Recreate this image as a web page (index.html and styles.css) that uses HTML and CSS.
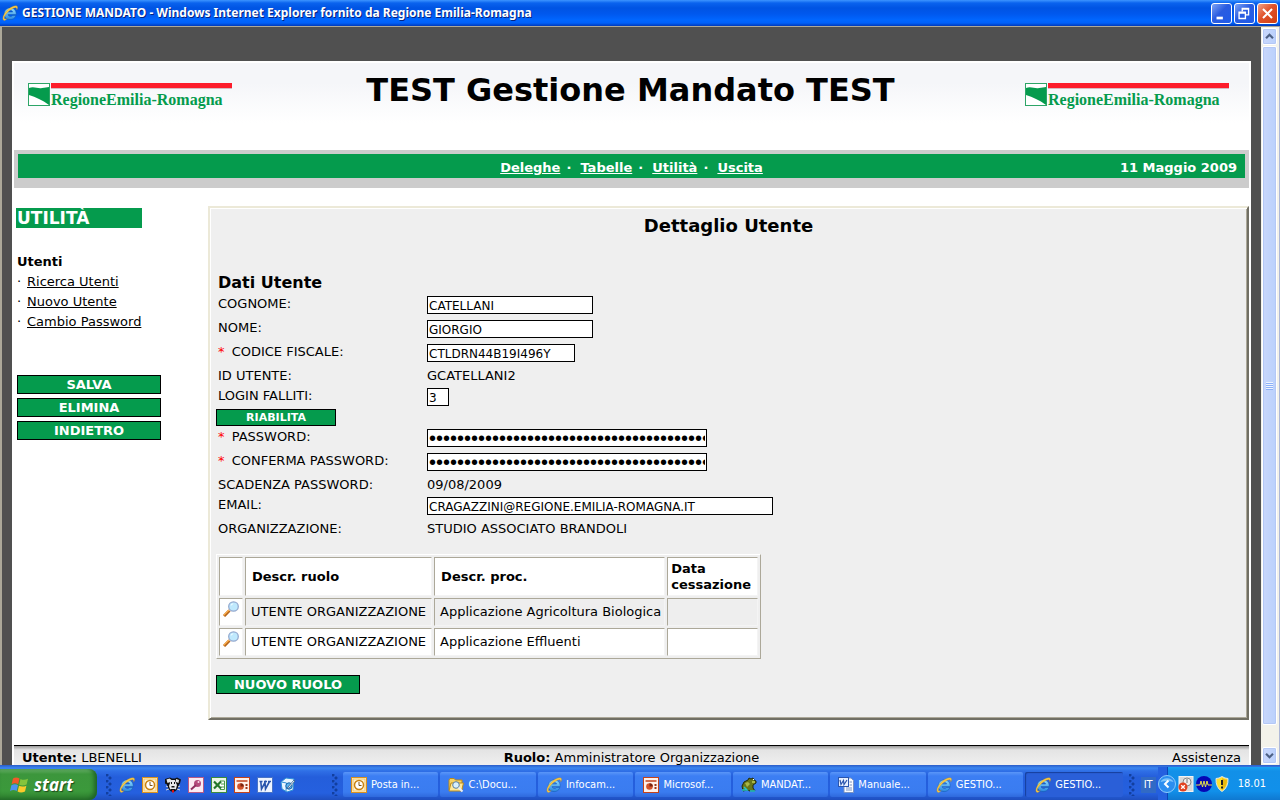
FILE: index.html
```html
<!DOCTYPE html>
<html lang="it">
<head>
<meta charset="utf-8">
<title>GESTIONE MANDATO</title>
<link rel="stylesheet" href="styles.css">
</head>
<body>
<svg class="defs" aria-hidden="true">
  <defs>
    <linearGradient id="sky" x1="0" y1="0" x2="0" y2="1"><stop offset="0" stop-color="#8fdcff"/><stop offset="1" stop-color="#2a86e0"/></linearGradient>
    <symbol id="ie" viewBox="0 0 16 16">
      <path d="M14.200 9.600H6c.2 2 3.400 2.500 4.700.9h3.200c-1 2.900-3.300 4.100-5.800 4.100C4.500 14.600 2.200 12.300 2.200 8.900c0-3.400 2.500-5.900 6-5.900 3.800 0 6.200 2.500 6 6.600zM10.600 7c-.3-1.900-4.200-2-4.700 0z" fill="url(#sky)" stroke="#1159ad" stroke-width=".5"/>
      <path d="M2.300 15.500C-.8 14.800 1.200 8.600 6.300 4.200 9.900 1.100 15.200-.8 15.600 2.200c.1.900-.3 1.900-.9 2.900.4-2.400-.8-3.100-3.300-1.900C6.900 5.200 2.500 10.300 2.300 12.800c-.1 1.300 1 1.500 3 .6-1.200 1.200-2.200 2.100-3 2.100z" fill="#f8c946" stroke="#b78921" stroke-width=".3"/>
    </symbol>
    <symbol id="outlook" viewBox="0 0 16 16">
      <rect x=".5" y=".5" width="15" height="15" fill="#fff2cf" stroke="#d9911f"/><rect x="2" y="2" width="12" height="12" fill="none" stroke="#f3c468"/>
      <circle cx="8" cy="8" r="4.500" fill="#fff" stroke="#c98212" stroke-width="1.500"/><path d="M8 5v3.500h2.500" fill="none" stroke="#80561b"/>
    </symbol>
    <symbol id="dog" viewBox="0 0 16 16">
      <path d="M0 2l5-1.500 2 1h3l2-1 4 2-1 4-1 1-1 4-3 3H6l-3-3-1-4-2-1z" fill="#111"/><path d="M1.500 2.500l3-1 2 1.500-1 2-3 1zM11 2l3 1-.5 3-2.500-1zM6 3h4l1 3 1 2-1 4-2 1H7l-2-1-1-3 1-3z" fill="#e8e8e8"/><path d="M6 5h1v2H6zM9 5h1v2H9zM6.500 9h3v1.500h-3zM6 12h4v1H6z" fill="#111"/><path d="M7 13h2v2.500H7z" fill="#d11"/><path d="M1 9l2 1M1 13l3-1M15 9l-2 1M15 13l-3-1" stroke="#ddd"/>
    </symbol>
    <symbol id="access" viewBox="0 0 16 16">
      <rect x=".5" y=".5" width="15" height="15" fill="#fbeaf2" stroke="#b65a86"/><circle cx="9.500" cy="6.500" r="3.500" fill="#b34a7b"/><path d="M8 8l-5 4.500" stroke="#8f2d5e" stroke-width="2"/><circle cx="10.500" cy="5" r="1" fill="#f8dce9"/>
    </symbol>
    <symbol id="excel" viewBox="0 0 16 16">
      <rect x=".5" y=".5" width="15" height="15" fill="#eaf6e6" stroke="#3c8b3d"/><path d="M9 4h4.500v8.500H9M10 7h3M10 10h3" fill="#fff" stroke="#4a9a4b"/><path d="M3 4.500l7 7M10 4.500l-7 7" stroke="#23772a" stroke-width="2.200"/>
    </symbol>
    <symbol id="ppt" viewBox="0 0 16 16">
      <rect x=".5" y=".5" width="15" height="15" fill="#fff0e9" stroke="#c4431b"/><path d="M2.500 4h11" stroke="#c4431b" stroke-width="1.500"/><circle cx="6.500" cy="9.500" r="3.300" fill="#d4532a"/><path d="M6.500 9.500V6.200A3.300 3.300 0 0 1 9.800 9.500z" fill="#7a2410"/><path d="M11.500 7h2v2h-2zM11.500 10h2v2h-2z" fill="#9b371b"/>
    </symbol>
    <symbol id="word" viewBox="0 0 16 16">
      <rect x=".5" y=".5" width="15" height="15" fill="#eef4ff" stroke="#4a74c5"/><path d="M2.500 4.500h3M3.800 4.500l.7 7.500L8 5.500l.5 6.500 4-7.500M7 4.500h3M11 4.500h3" fill="none" stroke="#2a55ad" stroke-width="1.600"/>
    </symbol>
    <symbol id="worddoc" viewBox="0 0 16 16">
      <path d="M6 1h7l2.500 2.500V15.500H6z" fill="#f8fbff" stroke="#7a93c2"/><path d="M8 11h6M8 13h6M11.500 5H14M11.500 8H14" stroke="#7a93c2"/><rect x=".5" y=".5" width="10" height="9" fill="#e6efff" stroke="#2a55ad"/><path d="M2 3l1 4.500L5.500 3.500l.5 4L9 3" fill="none" stroke="#2a55ad" stroke-width="1.200"/>
    </symbol>
    <symbol id="desk" viewBox="0 0 16 16">
      <path d="M1 5l5-4 8 1-1 11-6 2-5-3z" fill="#e9f6ff" stroke="#2e8fd6"/><path d="M1.500 5l5 1-.5 8" fill="none" stroke="#2e8fd6"/><circle cx="9" cy="9" r="3.200" fill="#5fb7ee" stroke="#1365ad"/><path d="M8 10l6-7 1 1-6 7-2 .5z" fill="#fff" stroke="#27578b" stroke-width=".8"/>
    </symbol>
    <symbol id="folder" viewBox="0 0 16 16">
      <path d="M1 3l1-1.500h4L7.500 3H14v10H1z" fill="#f6d265" stroke="#b98a1c"/><path d="M3 6h12.500l-2 8H1z" fill="#ffe99a" stroke="#b98a1c"/><circle cx="8" cy="8" r="3.300" fill="#d8f1ff" stroke="#5a7da0"/><path d="M10.500 10.500l4 4" stroke="#e8eef5" stroke-width="2"/>
    </symbol>
    <symbol id="frog" viewBox="0 0 16 16">
      <path d="M1 9l2-4 4-2 1-2 2 1 2-1 1 2 2 1v2l-3 2v3l2 3h-5l-3-1-4 1z" fill="#68761a" stroke="#232b08"/><path d="M4 6l3-1 2 2-3 3zM11 4h3v2h-3z" fill="#aab748"/><path d="M12 2h1v1h-1z" fill="#fff"/><path d="M1 13h5l-3-3M9 14h5" stroke="#25c4c9" stroke-width="1.500" fill="none"/>
    </symbol>
    <symbol id="winflag" viewBox="0 0 20 18">
      <path d="M3 2.500Q6 .5 9.500 2.500L8.200 8.200Q5 6.300 1.600 8.200z" fill="#f1592a"/><path d="M10.500 3Q14 4.800 18 2.800L16.600 8.600Q12.500 10.400 9.200 8.700z" fill="#85c43c"/><path d="M1.400 9.300Q5 7.300 8 9.200L6.700 15Q3.500 13.200 0 15.100z" fill="#4d93f0"/><path d="M9 9.800Q12.500 11.400 16.400 9.700L15 15.400Q11 17.300 7.600 15.500z" fill="#fbca2b"/>
    </symbol>
    <symbol id="lens" viewBox="0 0 16 16">
      <path d="M1 15l5.500-5.500" stroke="#b4641c" stroke-width="3"/><path d="M.7 14.300L6 9" stroke="#ffb04a" stroke-width="1.200"/><ellipse cx="10.500" cy="5.500" rx="4.800" ry="4.600" fill="#bfe9fd" stroke="#93a9cf" stroke-width="1.300"/><path d="M7.500 5q.6-2.500 3-2.700-1 1.500-3 2.700z" fill="#fff"/>
    </symbol>
    <symbol id="logo" viewBox="0 0 204 28">
      <rect x=".5" y=".5" width="21" height="22" fill="#fff" stroke="#2da567"/>
      <path d="M1 5c5-2 9 1 13 0 3 0 5-1 7-1v18C14 17 8 14 1 12z" fill="#059b4d"/>
      <rect x="23" y="0" width="181" height="5" fill="#fd1c2b"/><path d="M23 5.500h181" stroke="#d8b9c0"/>
      <text x="23" y="22" class="logo-text">RegioneEmilia-Romagna</text>
    </symbol>
  </defs>
</svg>

<header class="titlebar">
  <svg class="icon"><use href="#ie"/></svg>
  <span class="caption">GESTIONE MANDATO - Windows Internet Explorer fornito da Regione Emilia-Romagna</span>
  <button class="winbtn" aria-label="Riduci a icona"><svg viewBox="0 0 21 21"><path d="M5 15.500h7" stroke="#fff" stroke-width="3"/></svg></button>
  <button class="winbtn" aria-label="Ripristina"><svg viewBox="0 0 21 21"><path d="M8 8V5h7v7h-3M8 5.500h7M4.500 9v7h7V9zM4.500 10h7" fill="none" stroke="#fff" stroke-width="1.500"/></svg></button>
  <button class="winbtn close" aria-label="Chiudi"><svg viewBox="0 0 21 21"><path d="M5.500 5.500l10 10M15.500 5.500l-10 10" stroke="#fff" stroke-width="2.200"/></svg></button>
</header>

<div class="viewport">
  <div class="backdrop">
    <div class="sheet">
      <div class="banner">
        <svg class="logo" role="img" aria-label="Regione Emilia-Romagna"><use href="#logo"/></svg>
        <h1>TEST Gestione Mandato TEST</h1>
        <svg class="logo" role="img" aria-label="Regione Emilia-Romagna"><use href="#logo"/></svg>
      </div>
      <nav class="menu">
        <div class="menu-links"><a href="#">Deleghe</a><span>·</span><a href="#">Tabelle</a><span>·</span><a href="#">Utilità</a><span>·</span><a href="#">Uscita</a></div>
        <div class="date">11 Maggio 2009</div>
      </nav>
      <div class="columns">
        <aside class="side">
          <h2>UTILITÀ</h2>
          <h3>Utenti</h3>
          <ul>
            <li><a href="#">Ricerca Utenti</a></li>
            <li><a href="#">Nuovo Utente</a></li>
            <li><a href="#">Cambio Password</a></li>
          </ul>
          <div class="actions">
            <button class="btn">SALVA</button>
            <button class="btn">ELIMINA</button>
            <button class="btn">INDIETRO</button>
          </div>
        </aside>
        <main class="panel">
          <h2>Dettaglio Utente</h2>
          <form class="details">
            <h3>Dati Utente</h3>
            <div class="row field"><label for="cognome">COGNOME:</label><input id="cognome" class="medium" value="CATELLANI"></div>
            <div class="row field"><label for="nome">NOME:</label><input id="nome" class="medium" value="GIORGIO"></div>
            <div class="row field"><label for="cf"><i>*</i> CODICE FISCALE:</label><input id="cf" class="small" value="CTLDRN44B19I496Y"></div>
            <div class="row"><span class="name">ID UTENTE:</span><span>GCATELLANI2</span></div>
            <div class="row field"><label for="login">LOGIN FALLITI:</label><input id="login" class="tiny" value="3"></div>
            <button type="button" class="btn btn-small">RIABILITA</button>
            <div class="row field"><label for="pw"><i>*</i> PASSWORD:</label><input id="pw" type="password" class="large" value="0123456789012345678901234567890123456789"></div>
            <div class="row field"><label for="pw2"><i>*</i> CONFERMA PASSWORD:</label><input id="pw2" type="password" class="large" value="0123456789012345678901234567890123456789"></div>
            <div class="row"><span class="name">SCADENZA PASSWORD:</span><span>09/08/2009</span></div>
            <div class="row field"><label for="email">EMAIL:</label><input id="email" class="wide" value="CRAGAZZINI@REGIONE.EMILIA-ROMAGNA.IT"></div>
            <div class="row"><span class="name">ORGANIZZAZIONE:</span><span>STUDIO ASSOCIATO BRANDOLI</span></div>
          </form>
          <table class="roles">
            <thead><tr><th></th><th>Descr. ruolo</th><th>Descr. proc.</th><th class="end">Data<br>cessazione</th></tr></thead>
            <tbody>
              <tr class="alt"><td><a href="#" aria-label="Dettaglio"><svg class="icon"><use href="#lens"/></svg></a></td><td>UTENTE ORGANIZZAZIONE</td><td class="proc">Applicazione Agricoltura Biologica</td><td></td></tr>
              <tr><td><a href="#" aria-label="Dettaglio"><svg class="icon"><use href="#lens"/></svg></a></td><td>UTENTE ORGANIZZAZIONE</td><td class="proc">Applicazione Effluenti</td><td></td></tr>
            </tbody>
          </table>
          <button class="btn">NUOVO RUOLO</button>
        </main>
      </div>
      <footer class="status">
        <div><b>Utente:</b> LBENELLI</div>
        <div><b>Ruolo:</b> Amministratore Organizzazione</div>
        <div>Assistenza</div>
      </footer>
    </div>
  </div>
  <div class="scroll">
    <button aria-label="Su"><svg viewBox="0 0 15 15"><path d="M3.500 9.500l4-4 4 4" fill="none" stroke="#4d6185" stroke-width="2.500"/></svg></button>
    <div class="thumb"><span></span></div>
    <button aria-label="Giù"><svg viewBox="0 0 15 15"><path d="M3.500 5.500l4 4 4-4" fill="none" stroke="#4d6185" stroke-width="2.500"/></svg></button>
  </div>
</div>

<div class="taskbar">
  <button class="start"><svg><use href="#winflag"/></svg>start</button>
  <div class="grip"></div>
  <div class="quick">
    <svg class="icon"><use href="#ie"/></svg>
    <svg class="icon"><use href="#outlook"/></svg>
    <svg class="icon"><use href="#dog"/></svg>
    <svg class="icon"><use href="#access"/></svg>
    <svg class="icon"><use href="#excel"/></svg>
    <svg class="icon"><use href="#ppt"/></svg>
    <svg class="icon"><use href="#word"/></svg>
    <svg class="icon"><use href="#desk"/></svg>
  </div>
  <div class="grip"></div>
  <div class="tasks">
    <button><svg class="icon"><use href="#outlook"/></svg>Posta in...</button>
    <button><svg class="icon"><use href="#folder"/></svg>C:\Docu...</button>
    <button><svg class="icon"><use href="#ie"/></svg>Infocam...</button>
    <button><svg class="icon"><use href="#ppt"/></svg>Microsof...</button>
    <button><svg class="icon"><use href="#frog"/></svg>MANDAT...</button>
    <button><svg class="icon"><use href="#worddoc"/></svg>Manuale...</button>
    <button><svg class="icon"><use href="#ie"/></svg>GESTIO...</button>
    <button class="active"><svg class="icon"><use href="#ie"/></svg>GESTIO...</button>
  </div>
  <div class="grip grip-end"></div>
  <div class="lang">IT</div>
  <div class="tray">
    <button class="expand" aria-label="Mostra icone nascoste"><svg viewBox="0 0 18 18"><circle cx="9" cy="9" r="8.500" fill="#2b8ef0" stroke="#8ccbfa"/><path d="M2.500 7a7 6 0 0 1 13 0q-6-2-13 0z" fill="#7cc4fb"/><path d="M10.500 5.500L7 9l3.500 3.500" fill="none" stroke="#fff" stroke-width="2"/></svg></button>
    <svg class="icon" viewBox="0 0 16 16"><rect x="1" y=".5" width="14" height="15" fill="#d9d9d9" stroke="#f3f3f3"/><circle cx="9" cy="6" r="4" fill="#eee" stroke="#8a8a8a"/><path d="M9 3v4" stroke="#777"/><circle cx="5" cy="11" r="4.500" fill="#e2411f"/><path d="M3.200 9.200l3.600 3.600M6.800 9.200l-3.600 3.600" stroke="#fff" stroke-width="1.300"/></svg>
    <svg class="icon" viewBox="0 0 16 16"><circle cx="8" cy="8" r="8" fill="#0507b5"/><path d="M0 9h4l1-4 1.500 6L8 5l1.500 6L11 5l1 4h4" fill="none" stroke="#e6e04a"/></svg>
    <svg class="icon" viewBox="0 0 16 16"><path d="M8 .5Q11 2.500 14 2.500q.5 9-6 13-6.500-4-6-13Q5 2.500 8 .5z" fill="#ffdf2f" stroke="#dfe5ea"/><path d="M8 2q3 2 5 1.600Q13 11 8 14.300z" fill="#e9b90e"/><path d="M8 4v5M8 10.500v2" stroke="#222" stroke-width="2"/></svg>
    <span>18.01</span>
  </div>
</div>
</body>
</html>
```
FILE: styles.css
```css
* { box-sizing: border-box; }

body {
  margin: 0;
  height: 100vh;
  display: flex;
  flex-direction: column;
  overflow: hidden;
  font: 13px/20px "DejaVu Sans", Verdana, sans-serif;
  color: #000;
}

h1, h2, h3, ul { margin: 0; padding: 0; }
button { font: inherit; padding: 0; border: 0; cursor: pointer; }
.defs { position: absolute; width: 0; height: 0; }
.icon { width: 16px; height: 16px; flex: none; display: block; }

.titlebar {
  flex: none;
  height: 26px;
  display: flex;
  align-items: center;
  gap: 2px;
  padding: 0 2px;
  background: linear-gradient(#3d95ff 0, #0a63ee 3px, #0054e3 8px, #0058ee 14px, #0066ff 20px, #0060f8 23px, #0039b8 26px);
}
.caption {
  flex: 1;
  padding-left: 2px;
  color: #fff;
  font: bold 12px/20px "Noto Sans", "Trebuchet MS", sans-serif;
  text-shadow: 1px 1px #06237d;
  white-space: nowrap;
}
.winbtn {
  width: 21px;
  height: 21px;
  border: 1px solid #fff;
  border-radius: 3px;
  background: linear-gradient(135deg, #7ea4f5, #2a5ce0 45%, #1f5bea);
}
.winbtn svg { display: block; width: 19px; height: 19px; }
.winbtn.close { background: linear-gradient(135deg, #f0a288, #e0512a 45%, #cf3f12); }

.viewport {
  flex: 1;
  min-height: 0;
  display: flex;
  border: solid #aca899;
  border-width: 1px 0 0 2px;
}
.backdrop {
  flex: 1;
  min-width: 0;
  overflow: hidden;
  padding: 34px 10px 0;
  background: #505050;
}
.sheet { background: #fff; padding: 2px 2px 0; }

.banner {
  height: 87px;
  display: flex;
  justify-content: space-between;
  align-items: flex-start;
  padding: 0 20px 0 14px;
  background: linear-gradient(#f5f6f9 20px, #fff 60px);
}
.logo { width: 204px; height: 28px; margin-top: 20px; }
.logo-text { font: bold 16px "Liberation Serif", serif; fill: #059b4d; }
.banner h1 { font-size: 32px; line-height: 54px; padding-left: 4px; white-space: nowrap; }

.menu {
  display: grid;
  grid-template-columns: 1fr auto 1fr;
  height: 38px;
  border: solid #ccc;
  border-width: 4px 4px 10px;
  background: #059b4d;
  color: #fff;
  font-weight: bold;
  line-height: 28px;
}
.menu a { color: #fff; }
.menu-links { grid-column: 2; }
.menu-links span { display: inline-block; width: 20px; padding-left: 6px; }
.date { text-align: right; padding-right: 8px; }

.columns { display: flex; align-items: flex-start; padding-top: 18px; }
.side { flex: none; width: 194px; padding: 2px 0 0 2px; }
.side h2 {
  width: 126px;
  padding-left: 1px;
  background: #059b4d;
  color: #fff;
  font-size: 17px;
  line-height: 20px;
}
.side h3 { margin-top: 24px; padding-left: 1px; font-size: 13px; line-height: 20px; }
.side ul { list-style: none; padding-left: 1px; }
.side li::before { content: "·"; display: inline-block; width: 10px; }
.side a { color: #000; }
.actions { display: flex; flex-direction: column; gap: 4px; margin-top: 43px; padding-left: 1px; }

.btn {
  display: block;
  width: 144px;
  height: 19px;
  border: 1px solid #000;
  background: #059b4d;
  color: #fff;
  font-weight: bold;
  line-height: 17px;
}
.btn-small { width: 120px; height: 17px; font-size: 11px; line-height: 15px; margin: -1px 0 1px; }

.panel {
  flex: 1;
  min-width: 0;
  padding: 5px 6px 24px;
  background: #efefef;
  border: 2px solid;
  border-color: #ece9d8 #716f64 #716f64 #ece9d8;
  box-shadow: inset 1px 1px #fff, inset -1px -1px #aca899;
}
.panel > h2 { text-align: center; font-size: 18px; line-height: 26px; }
.details h3 { margin-top: 33px; padding-left: 2px; font-size: 16px; line-height: 22px; }
.row { display: flex; align-items: flex-start; padding-left: 2px; height: 20px; }
.row.field { height: 24px; }
.row label, .row .name { flex: none; width: 209px; }
.row i { color: #f00; font-style: normal; padding-right: 3px; }
.row input {
  height: 18px;
  margin-top: 2px;
  padding: 1px 1px 0;
  border: 1px solid #000;
  border-radius: 0;
  background: #fff;
  color: #000;
  font: 12px/15px "DejaVu Sans", Verdana, sans-serif;
}
.row input[type="password"] { font: 20px/15px "Liberation Sans", Arial, sans-serif; }
.tiny { width: 22px; }
.small { width: 148px; }
.medium { width: 166px; }
.large { width: 280px; }
.wide { width: 346px; }

.roles {
  margin: 15px 0 16px;
  border: 1px solid;
  border-color: #fff #aca899 #aca899 #fff;
  border-spacing: 2px;
}
.roles th, .roles td {
  height: 28px;
  padding: 0 5px;
  border: 1px solid;
  border-color: #aca899 #f4f4f4 #f4f4f4 #aca899;
  background: #fff;
  text-align: left;
  white-space: nowrap;
}
.roles th { height: 39px; padding: 0 6px; font-size: 13px; line-height: 16px; }
.roles th.end { padding: 0 6px 0 3px; }
.roles td.proc { padding-right: 3px; }
.roles td:first-child { padding: 0 3px 6px 3px; }
.roles th:first-child { padding: 0; }
.roles .alt td:not(:first-child) { background: #eee; }

.status {
  display: grid;
  grid-template-columns: 1fr auto 1fr;
  margin-top: 25px;
  padding: 4px 8px 0;
  border-top: 1px solid #000;
  background: linear-gradient(#999, #e4e4e4 4px, #f0f0f0 20px);
  line-height: 16px;
}
.status div:last-child { text-align: right; }

.scroll {
  flex: none;
  width: 19px;
  display: flex;
  flex-direction: column;
  gap: 1px;
  padding: 1px 2px 1px 1px;
  background: #f3f2ea;
  border-right: 1px solid #aeb8d8;
}
.scroll button, .thumb {
  border: 1px solid #fff;
  border-radius: 2px;
  background: linear-gradient(90deg, #c9d7fc, #bad1fc);
  box-shadow: inset 0 0 0 1px #b4c8f6;
}
.scroll button { height: 17px; flex: none; }
.scroll svg { display: block; width: 13px; height: 15px; }
.thumb { flex: 0 1 679px; margin-bottom: auto; display: grid; place-items: center; }
.thumb span { width: 7px; height: 8px; background: repeating-linear-gradient(#eef4fe 0 1px, #8cb0f8 1px 2px); }

.taskbar {
  flex: none;
  height: 35px;
  display: flex;
  align-items: stretch;
  padding-top: 1px;
  background: linear-gradient(#2a5cc8 0, #3a86f0 3px, #2f6fe6 6px, #245edb 12px, #2560df 28px, #1f4fbf 35px);
  color: #fff;
  font: 11px/16px "DejaVu Sans Condensed", Tahoma, sans-serif;
}
.start {
  width: 97px;
  margin-top: 3px;
  display: flex;
  align-items: center;
  gap: 4px;
  padding-left: 10px;
  border-radius: 0 8px 8px 0;
  background: linear-gradient(#6bb36b, #3c963c 5px, #3b993b 22px, #2d7d2d);
  box-shadow: inset -3px -1px 4px #1f6426;
  color: #fff;
  font: italic bold 17px/24px "Open Sans", sans-serif;
  text-shadow: 1px 1px 1px #1b4a1b;
}
.start svg { width: 20px; height: 18px; }
.grip {
  flex: none;
  width: 6px;
  margin: 8px 0 4px 9px;
  background:
    radial-gradient(circle at 1px 1px, #123f9f 1px, transparent 2px) 0 0 / 6px 6px,
    radial-gradient(circle at 4px 4px, #123f9f 1px, transparent 2px) 0 0 / 6px 6px;
}
.grip-end { margin-left: 6px; }
.quick { display: flex; align-items: center; gap: 7px; padding: 4px 27px 0 7px; }
.tasks { flex: 1; min-width: 0; display: flex; gap: 2px; margin: 6px 0 3px 5px; }
.tasks button {
  flex: 1;
  min-width: 0;
  display: flex;
  align-items: center;
  gap: 4px;
  padding-left: 8px;
  border-radius: 2px;
  background: linear-gradient(#5a96f8, #3c7ef3 4px, #3a7cf0 20px, #2f69dc);
  color: #fff;
  white-space: nowrap;
}
.tasks .active { padding-left: 10px; background: #2a5fd8; box-shadow: inset 1px 1px 1px #173f9c; }
.lang { align-self: center; margin: 4px 2px 0 6px; padding: 0 3px; background: #316ac5; }
.tray {
  display: flex;
  align-items: center;
  gap: 2px;
  margin-top: 1px;
  padding-right: 14px;
  background: linear-gradient(90deg, #2560df 9px, #0b46b5 9px, #0b46b5 10px, transparent 10px), linear-gradient(#1aa4f2, #1290e8 4px, #1190ea 24px, #0f78d0);
}
.tray span { padding-left: 6px; }
.expand { width: 18px; height: 18px; background: none; }
.expand svg { display: block; width: 18px; height: 18px; }
```
